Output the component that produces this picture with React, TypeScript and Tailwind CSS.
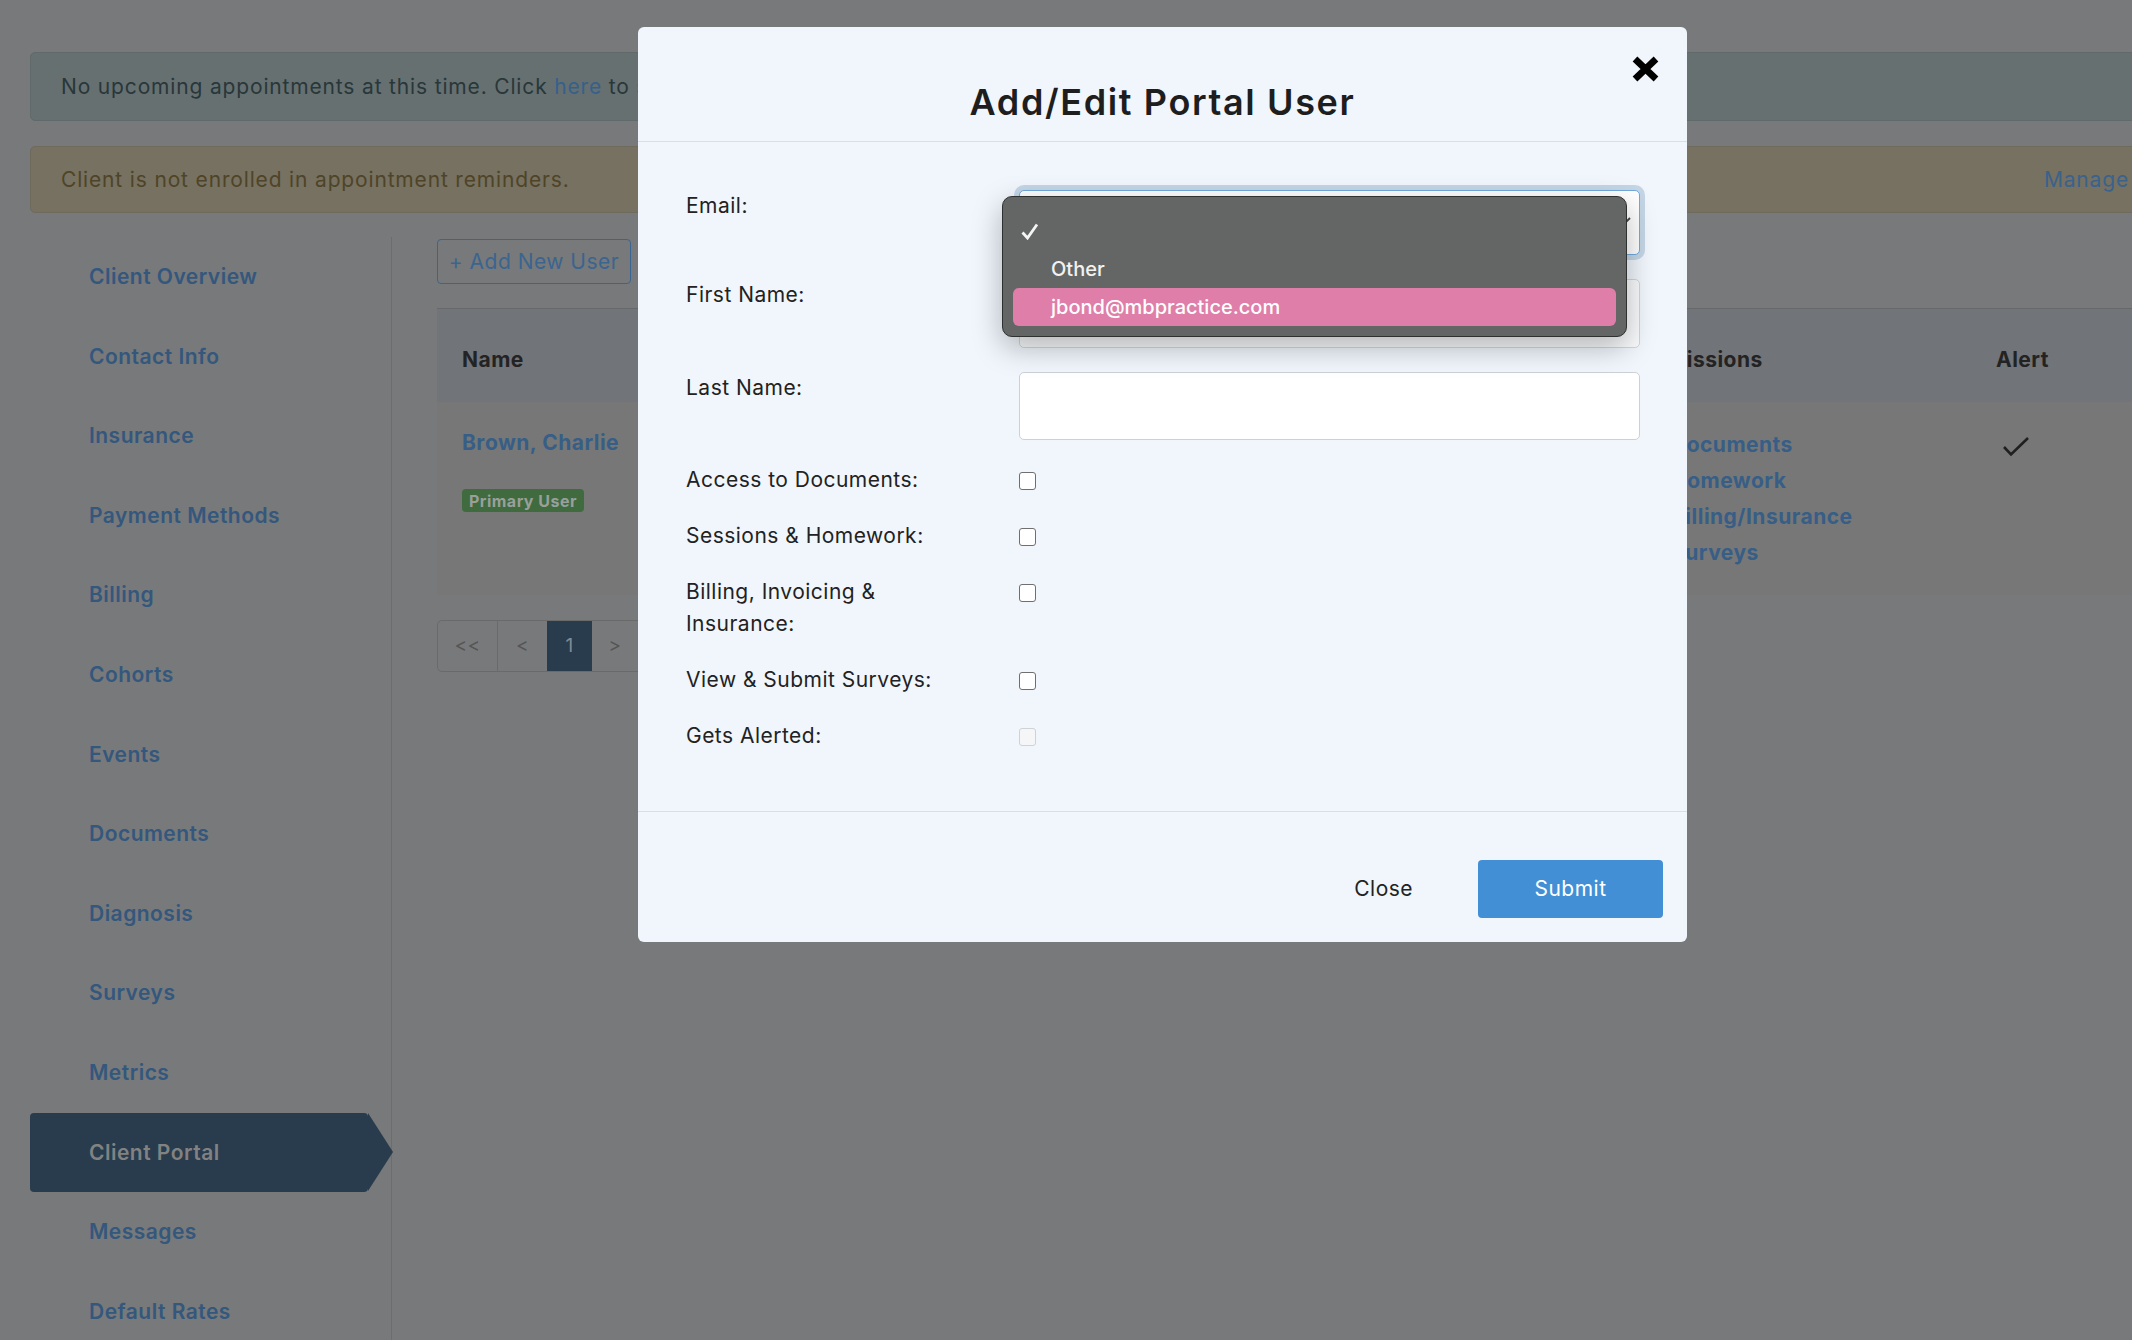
import React from "react";

const NAV = [
  "Client Overview",
  "Contact Info",
  "Insurance",
  "Payment Methods",
  "Billing",
  "Cohorts",
  "Events",
  "Documents",
  "Diagnosis",
  "Surveys",
  "Metrics",
  "Client Portal",
  "Messages",
  "Default Rates",
];

const PERMS = ["Documents", "Homework", "Billing/Insurance", "Surveys"];

const CHECKS = [
  { label: "Access to Documents:", disabled: false },
  { label: "Sessions & Homework:", disabled: false },
  { label: "Billing, Invoicing & Insurance:", disabled: false },
  { label: "View & Submit Surveys:", disabled: false },
  { label: "Gets Alerted:", disabled: true },
];

const Sidebar = () => {
  return (
    <nav className="w-[362px] h-[1103px] shrink-0 border-r border-[#6c6d6e] flex flex-col">
      {NAV.map((item) => {
        const active = item === "Client Portal";
        return (
          <div
            key={item}
            className={`relative w-[338px] h-[79.6px] shrink-0 flex items-center pl-[59px] text-[21px] font-semibold ${
              active ? "bg-[#283c4d] text-[#828282] rounded-[4px]" : "text-[#34577d]"
            }`}
          >
            {item}
            {active && (
              <span className="absolute left-full top-0 w-0 h-0 border-y-[39.8px] border-y-transparent border-l-[25px] border-l-[#283c4d]" />
            )}
          </div>
        );
      })}
    </nav>
  );
};

const UsersTable = () => {
  return (
    <div className="flex-1 pl-[45px] pt-[2px]">
      <button className="h-[45px] w-[194px] border border-[#3a6590] rounded-[4px] text-[21px] text-[#3a6590] flex items-center justify-center">
        + Add New User
      </button>

      <div className="mt-[24px] w-[1720px]">
        <div className="grid grid-cols-[1194px_365px_1fr] h-[94px] items-center pt-[9px] bg-[#717478] border-t border-[#66686a] text-[21px] font-bold text-[#232323]">
          <div className="pl-[25px]">Name</div>
          <div>Permissions</div>
          <div>Alert</div>
        </div>
        <div className="grid grid-cols-[1194px_365px_1fr] h-[193px] bg-[#777777] text-[21px] font-bold">
          <div className="pl-[25px] pt-[27px]">
            <div className="leading-[28px] text-[#375e86]">Brown, Charlie</div>
            <span className="mt-[32px] inline-flex h-[23px] items-center rounded-[4px] bg-[#3f6b3f] px-[7px] text-[16px] font-bold text-[#9a9f9a]">
              Primary User
            </span>
          </div>
          <ul className="pt-[25px] pl-[40px] leading-[36px] text-[#375e86]">
            {PERMS.map((p) => (
              <li key={p}>{p}</li>
            ))}
          </ul>
          <div className="pt-[34px] pl-[6px]">
            <svg width="28" height="21" viewBox="0 0 28 21" fill="none">
              <polyline points="2,11 9,18.5 26,2" stroke="#1f1f1f" strokeWidth="2.6" />
            </svg>
          </div>
        </div>
      </div>

      <div className="mt-[25px] inline-flex h-[52px] rounded-[5px] border border-[#6a6a6a] overflow-hidden text-[19px] text-[#555555]">
        <div className="w-[60px] flex items-center justify-center border-r border-[#6a6a6a]">&lt;&lt;</div>
        <div className="w-[49px] flex items-center justify-center">&lt;</div>
        <div className="w-[45px] flex items-center justify-center bg-[#283c4d] text-[#7f8b95]">1</div>
        <div className="w-[47px] flex items-center justify-center border-r border-[#6a6a6a]">&gt;</div>
        <div className="w-[60px] flex items-center justify-center">&gt;&gt;</div>
      </div>
    </div>
  );
};

const BackgroundPage = () => {
  return (
    <div className="pt-[52px] pl-[30px]">
      <div className="h-[69px] w-[2120px] flex items-center pl-[30px] rounded-[5px] border border-[#606a6b] bg-[#667071] text-[21px] tracking-[0.04em] text-[#283739]">
        No upcoming appointments at this time. Click&nbsp;<span className="text-[#36608c]">here</span>&nbsp;to schedule one.
      </div>
      <div className="mt-[25px] h-[67px] w-[2120px] flex items-center justify-between pl-[30px] pr-[20px] rounded-[5px] border border-[#6f6b5c] bg-[#767161] text-[21px] tracking-[0.04em]">
        <span className="text-[#4f4427]">Client is not enrolled in appointment reminders.</span>
        <span className="text-[#3a628d]">Manage</span>
      </div>
      <div className="mt-[24px] flex">
        <Sidebar />
        <UsersTable />
      </div>
    </div>
  );
};

const EmailMenu = () => {
  return (
    <div className="absolute left-[364px] top-[169px] w-[625px] h-[141px] rounded-[10px] border border-[#2f3030] bg-[#646666] shadow-[0_10px_30px_rgba(0,0,0,0.28)] px-[10px] pt-[15px] tracking-normal font-['Inter','Noto_Sans',sans-serif] text-[20px] font-medium text-[#f2f2f2]">
      <div className="h-[38px] flex items-center pl-[8px]">
        <svg width="18" height="17" viewBox="0 0 18 17" fill="none">
          <polyline points="1.5,9.5 6.5,15 16,1.5" stroke="#f5f5f5" strokeWidth="2.8" />
        </svg>
      </div>
      <div className="h-[38px] flex items-center pl-[38px]">Other</div>
      <div className="h-[38px] flex items-center pl-[38px] rounded-[6px] bg-[#de7ea9] text-white">
        jbond@mbpractice.com
      </div>
    </div>
  );
};

const PortalUserModal = () => {
  return (
    <div className="absolute left-[638px] top-[27px] w-[1049px] h-[915px] rounded-[6px] bg-[#f0f6fc] text-[#222222]">
      <div className="relative h-[115px] border-b border-[#d9dfe5] text-center pt-[53px]">
        <h2 className="text-[36px] leading-[44px] font-semibold tracking-[0.045em] text-[#1e1e1e]">Add/Edit Portal User</h2>
        <button className="absolute left-[994px] top-[29px]">
          <svg width="27" height="26" viewBox="0 0 27 26">
            <path d="M3 3 L24 23 M24 3 L3 23" stroke="#000" strokeWidth="6.8" />
          </svg>
        </button>
      </div>

      <div className="h-[669px] px-[48px] pt-[48px] text-[21px]">
        <div className="grid grid-cols-[333px_621px] gap-y-[24px] items-start leading-[32px]">
          <label>Email:</label>
          <div className="relative h-[65px] rounded-[5px] border border-[#72a9dc] bg-white ring-[5px] ring-[#c4d6e6]">
            <svg className="absolute right-[8px] top-[26px]" width="14" height="9" viewBox="0 0 14 9" fill="none">
              <polyline points="1,1 7,7 13,1" stroke="#444" strokeWidth="1.8" />
            </svg>
          </div>

          <label>First Name:</label>
          <div className="h-[69px] rounded-[5px] border border-[#d2d6da] bg-[#f8fafc]" />

          <label>Last Name:</label>
          <div className="h-[68px] rounded-[5px] border border-[#cdd1d5] bg-white" />

          {CHECKS.map((c) => (
            <React.Fragment key={c.label}>
              <label className={c.label.startsWith("Billing") ? "w-[210px]" : ""}>{c.label}</label>
              <div className="pt-[8px]">
                <div
                  className={`w-[17px] h-[18px] rounded-[3px] border ${
                    c.disabled ? "border-[#d0d3d6] bg-[#f4f6f8]" : "border-[#6f6f6f] bg-white"
                  }`}
                />
              </div>
            </React.Fragment>
          ))}
        </div>
      </div>

      <div className="border-t border-[#d9dfe5] flex justify-end items-start pt-[48px] pr-[24px] text-[21px]">
        <button className="h-[58px] px-[22px] text-[#222222]">Close</button>
        <button className="ml-[43px] h-[58px] w-[185px] rounded-[4px] bg-[#438fd5] text-white">Submit</button>
      </div>

      <EmailMenu />
    </div>
  );
};

export default function App() {
  return (
    <div className="relative w-[2132px] h-[1340px] overflow-hidden bg-[#78797a] tracking-[0.03em] font-['Inter','Liberation_Sans',sans-serif]">
      <BackgroundPage />
      <PortalUserModal />
    </div>
  );
}
